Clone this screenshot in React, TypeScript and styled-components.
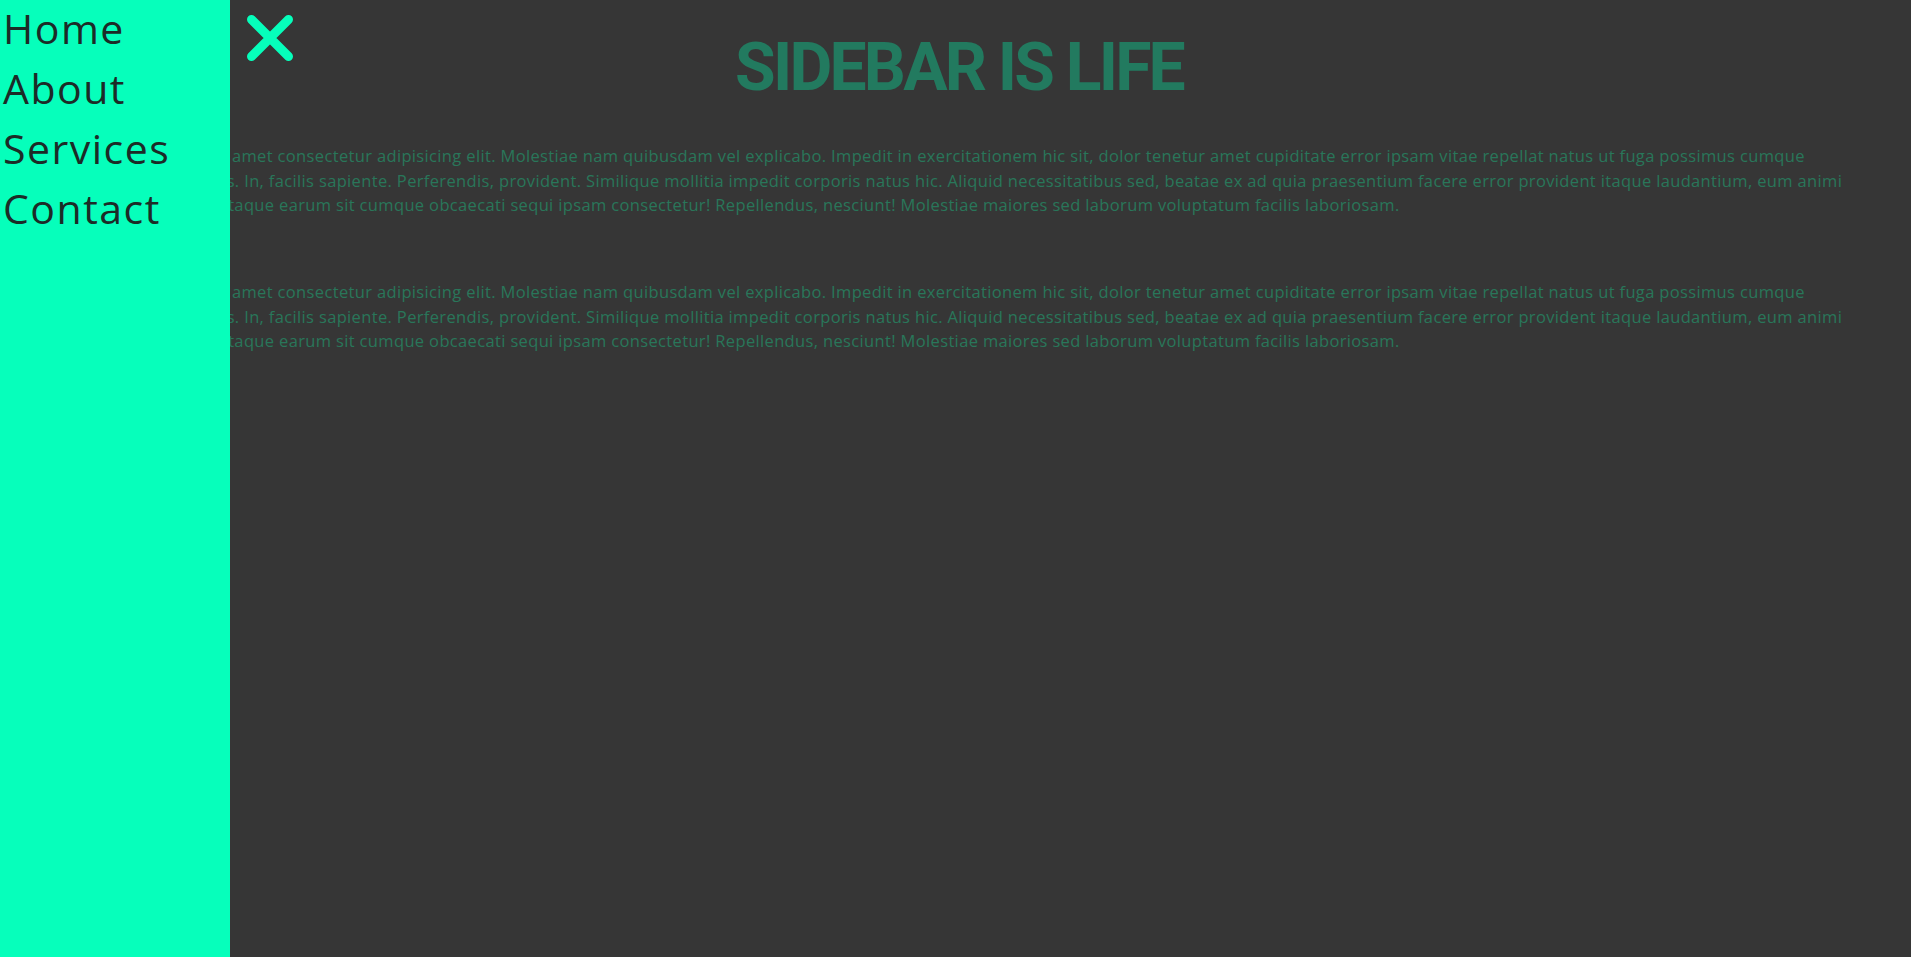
import React from "react";
import styled, { createGlobalStyle } from "styled-components";

const GlobalStyle = createGlobalStyle`
  html, body {
    margin: 0;
    padding: 0;
    background: #363636;
  }
  body {
    min-height: 100vh;
    overflow: hidden;
    font-family: "Open Sans", "Noto Sans", sans-serif;
  }
  * { box-sizing: border-box; }
`;

const Page = styled.div`
  position: relative;
  min-height: 100vh;
  background: #363636;
`;

const Sidebar = styled.aside`
  position: fixed;
  top: 0;
  left: 0;
  width: 230px;
  height: 100vh;
  background: #06ffbb;
  z-index: 10;
`;

const NavList = styled.ul`
  list-style: none;
  margin: -2px 0 0;
  padding: 0 0 0 3px;
  display: flex;
  flex-direction: column;
`;

const NavLink = styled.a`
  display: block;
  font-family: "Open Sans", "Noto Sans", sans-serif;
  font-weight: 400;
  font-size: 41px;
  line-height: 60px;
  letter-spacing: 1.5px;
  color: #1c2b27;
  text-decoration: none;
`;

const CloseButton = styled.button`
  position: absolute;
  top: 15px;
  left: 247px;
  width: 46px;
  height: 46px;
  padding: 0;
  border: none;
  background: transparent;
  cursor: pointer;
  display: flex;
`;

const Main = styled.main`
  padding: 35px 40px 0 51px;
  display: flex;
  flex-direction: column;
`;

const Title = styled.h1`
  margin: 0 0 0 -4px;
  text-align: center;
  font-family: Roboto, "Liberation Sans", sans-serif;
  font-weight: 700;
  font-size: 66px;
  line-height: 66px;
  letter-spacing: -2.8px;
  color: #227a5f;
`;

const Paragraph = styled.p<{ $top: number }>`
  margin: ${(p) => p.$top}px 0 0;
  font-family: "Open Sans", "Noto Sans", sans-serif;
  font-size: 16.5px;
  line-height: 24.5px;
  letter-spacing: 0.35px;
  white-space: nowrap;
  color: #29765a;
`;

const CloseIcon = () => (
  <svg width="46" height="46" viewBox="0 0 46 46" fill="none">
    <path d="M4.5 4.5 L41.5 41.5 M41.5 4.5 L4.5 41.5" stroke="#06ffbb" strokeWidth="9" strokeLinecap="round" />
  </svg>
);

const lines = [
  "Lorem ipsum dolor sit amet consectetur adipisicing elit. Molestiae nam quibusdam vel explicabo. Impedit in exercitationem hic sit, dolor tenetur amet cupiditate error ipsam vitae repellat natus ut fuga possimus cumque",
  "Quod fugiat eum nobis. In, facilis sapiente. Perferendis, provident. Similique mollitia impedit corporis natus hic. Aliquid necessitatibus sed, beatae ex ad quia praesentium facere error provident itaque laudantium, eum animi",
  "Nulla voluptates eius itaque earum sit cumque obcaecati sequi ipsam consectetur! Repellendus, nesciunt! Molestiae maiores sed laborum voluptatum facilis laboriosam.",
];

const Text = ({ top }: { top: number }) => (
  <Paragraph $top={top}>
    {lines.map((l, i) => (
      <React.Fragment key={i}>
        {l}
        {i < lines.length - 1 && <br />}
      </React.Fragment>
    ))}
  </Paragraph>
);

export default function App() {
  return (
    <Page>
      <GlobalStyle />
      <Sidebar>
        <nav>
          <NavList>
            {["Home", "About", "Services", "Contact"].map((item) => (
              <li key={item}>
                <NavLink href="#">{item}</NavLink>
              </li>
            ))}
          </NavList>
        </nav>
        <CloseButton aria-label="Close sidebar">
          <CloseIcon />
        </CloseButton>
      </Sidebar>
      <Main>
        <Title>SIDEBAR IS LIFE</Title>
        <Text top={43} />
        <Text top={62.5} />
      </Main>
    </Page>
  );
}
